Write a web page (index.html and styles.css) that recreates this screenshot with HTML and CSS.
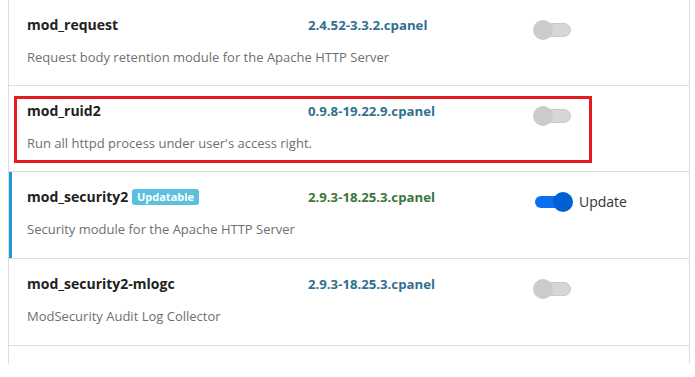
FILE: index.html
```html
<!DOCTYPE html>
<html lang="en">
<head>
  <meta charset="UTF-8">
  <title>Apache Modules</title>
  <link rel="stylesheet" href="styles.css">
</head>
<body>
    <!-- Module list -->
    <div class="module-list">
        <div class="module-row">
            <div class="module-name">mod_request</div>
            <div class="module-version">2.4.52-3.3.2.cpanel</div>
            <div class="module-action">
                <span class="switch"><span class="track"></span><span class="knob"></span></span>
            </div>
            <div class="module-desc">Request body retention module for the Apache HTTP Server</div>
        </div>

        <div class="module-row">
            <div class="highlight-box"></div>
            <div class="module-name">mod_ruid2</div>
            <div class="module-version">0.9.8-19.22.9.cpanel</div>
            <div class="module-action">
                <span class="switch"><span class="track"></span><span class="knob"></span></span>
            </div>
            <div class="module-desc">Run all httpd process under user's access right.</div>
        </div>

        <div class="module-row updatable">
            <div class="module-name">mod_security2 <span class="badge">Updatable</span></div>
            <div class="module-version version-update">2.9.3-18.25.3.cpanel</div>
            <div class="module-action">
                <span class="switch on"><span class="track"></span><span class="knob"></span></span>
                <span class="action-label">Update</span>
            </div>
            <div class="module-desc">Security module for the Apache HTTP Server</div>
        </div>

        <div class="module-row">
            <div class="module-name">mod_security2-mlogc</div>
            <div class="module-version">2.9.3-18.25.3.cpanel</div>
            <div class="module-action">
                <span class="switch"><span class="track"></span><span class="knob"></span></span>
            </div>
            <div class="module-desc">ModSecurity Audit Log Collector</div>
        </div>
    </div>
</body>
</html>
```

FILE: styles.css
```css
body {
    font-family: "Open Sans", Arial, sans-serif;
    margin: 0 5px 0 8px;
    background-color: #fff;
    color: #222;
}

.module-list {
    border-left: 1px solid #ddd;
    border-right: 1px solid #ddd;
    padding-bottom: 18px;
}

.module-row {
    position: relative;
    display: grid;
    grid-template-columns: 281px 225px 1fr;
    align-items: start;
    padding: 16px 18px 19px;
    border-bottom: 1px solid #ddd;
}

.module-row + .module-row + .module-row {
    padding-bottom: 20px;
}

.module-row.updatable {
    box-shadow: inset 3px 0 0 #1b9ad6;
}

.module-name {
    font-size: 14px;
    font-weight: bold;
    line-height: 18px;
    color: #222;
}

.module-version {
    font-size: 13.2px;
    font-weight: bold;
    line-height: 18px;
    color: #31708f;
}

.version-update {
    color: #3c763d;
}

.module-desc {
    grid-column: 1 / -1;
    margin-top: 14px;
    font-size: 13px;
    line-height: 18px;
    color: #6f6f6f;
}

.badge {
    display: inline-block;
    padding: 0 5px;
    border-radius: 3px;
    background-color: #5bc0de;
    color: white;
    font-size: 11px;
    font-weight: bold;
    line-height: 16px;
    vertical-align: 1px;
}

.module-action {
    display: flex;
    align-items: flex-start;
    gap: 6px;
    height: 18px;
}

.switch {
    position: relative;
    display: inline-block;
    flex-shrink: 0;
    width: 38px;
    height: 20px;
    margin-top: 4px;
}

.switch .track {
    position: absolute;
    top: 3px;
    bottom: 3px;
    left: 6px;
    right: 0;
    border: 1px solid #c9c9c9;
    border-radius: 7px;
    background-color: #d6d6d6;
}

.switch .knob {
    position: absolute;
    top: 0;
    left: 0;
    width: 20px;
    height: 20px;
    border-radius: 50%;
    background-color: #cbcbcb;
}

.switch.on {
    margin-left: 2px;
}

.switch.on .track {
    top: 4px;
    bottom: 4px;
    left: 0;
    right: 6px;
    border: none;
    border-radius: 6px;
    background-color: #0b6ff0;
}

.switch.on .knob {
    left: 18px;
    background-color: #005fd1;
}

.action-label {
    margin-top: 4px;
    font-size: 14px;
    line-height: 20px;
    color: #333;
}

/* red annotation frame */
.highlight-box {
    position: absolute;
    top: 10px;
    left: 5px;
    width: 572px;
    height: 61px;
    border: 3px solid #e31b23;
}
```
